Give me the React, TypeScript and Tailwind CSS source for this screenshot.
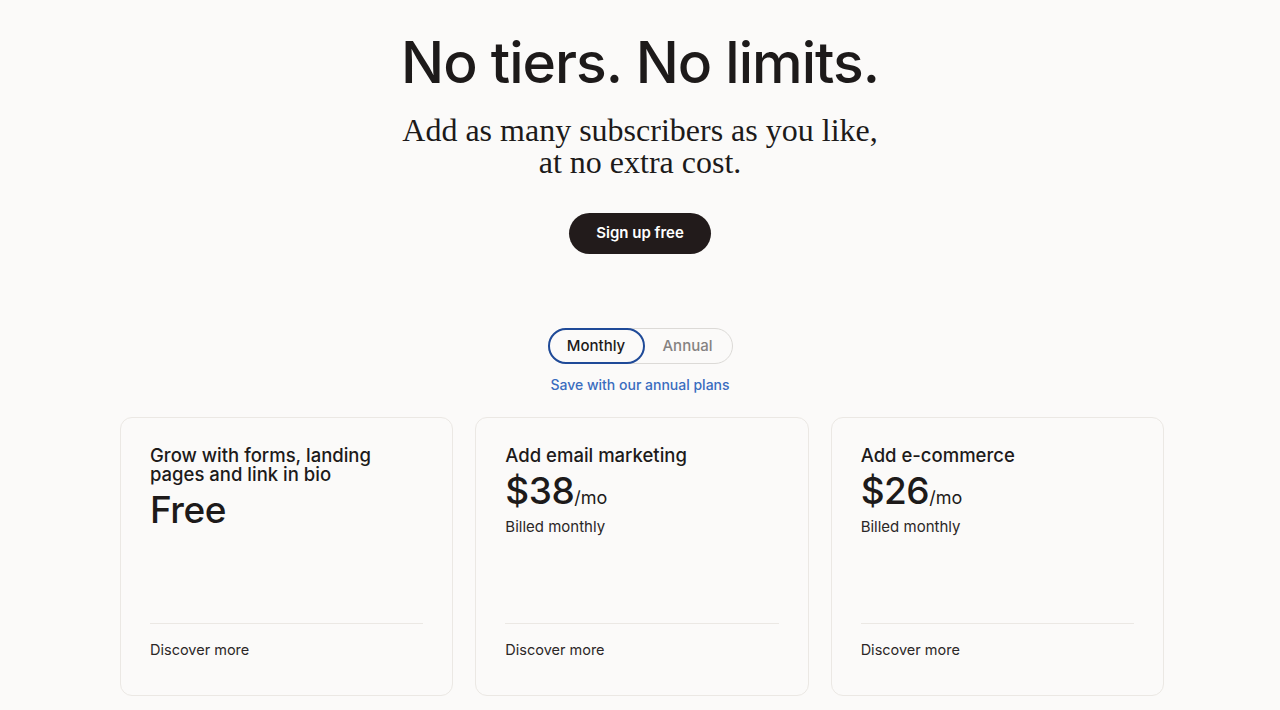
const plans = [
  { title: "Grow with forms, landing pages and link in bio", price: "Free", per: "", note: "" },
  { title: "Add email marketing", price: "$38", per: "/mo", note: "Billed monthly" },
  { title: "Add e-commerce", price: "$26", per: "/mo", note: "Billed monthly" },
];

function PlanCard({ plan }: { plan: (typeof plans)[number] }) {
  return (
    <article className="flex h-[279px] flex-col rounded-xl border border-[#ebe8e4] bg-[#fbfaf9] px-[29px] pt-[28px]">
      <h3 className="max-w-[245px] text-[18.5px] leading-[19px] font-medium text-[#1d1a1a]">{plan.title}</h3>
      <p className="mt-[6px] flex items-baseline text-[#1d1a1a]">
        <span className="text-[37px] leading-[40px] font-medium tracking-[-0.5px]">{plan.price}</span>
        {plan.per ? <span className="text-[18px]">{plan.per}</span> : null}
      </p>
      {plan.note ? <p className="mt-[6px] text-[15px] leading-5 text-[#2b2727]">{plan.note}</p> : null}
      <div className="mt-auto border-t border-[#ebe8e4] pt-[13px] pb-[34px]">
        <a className="text-[14.5px] leading-5 text-[#2b2727]">Discover more</a>
      </div>
    </article>
  );
}

export default function App() {
  return (
    <div className="min-h-[710px] bg-[#fbfaf9] font-['Inter',sans-serif] text-[#1d1a1a]">
      <section className="flex flex-col items-center pt-[28px]">
        <h1 className="text-[57px] leading-[70px] font-medium tracking-[-1px] text-[#1d1a1a]">
          No tiers. No limits.
        </h1>
        <p className="mt-[16px] text-center font-['Liberation_Serif',serif] text-[32px] leading-[32px] text-[#1d1a1a]">
          Add as many subscribers as you like,
          <br />
          at no extra cost.
        </p>
        <button className="mt-[35px] h-[41px] w-[142px] rounded-full bg-[#221b1b] text-[15px] font-semibold text-white">
          Sign up free
        </button>
        <div className="mt-[74px] flex h-[36px] w-[185px] rounded-full border border-[#dcdad7]">
          <span className="-m-px flex w-[97px] items-center justify-center rounded-full border-2 border-[#1f4a98] text-[15px] font-medium text-[#1d1a1a]">
            Monthly
          </span>
          <span className="flex flex-1 items-center justify-center text-[15px] font-medium text-[#858281]">
            Annual
          </span>
        </div>
        <a className="mt-[10px] text-[14px] font-medium text-[#3a6cbf]">Save with our annual plans</a>
      </section>
      <section className="mx-auto mt-[22px] grid max-w-[1044px] translate-x-[2px] grid-cols-3 gap-[22px]">
        {plans.map((plan) => (
          <PlanCard key={plan.title} plan={plan} />
        ))}
      </section>
    </div>
  );
}
